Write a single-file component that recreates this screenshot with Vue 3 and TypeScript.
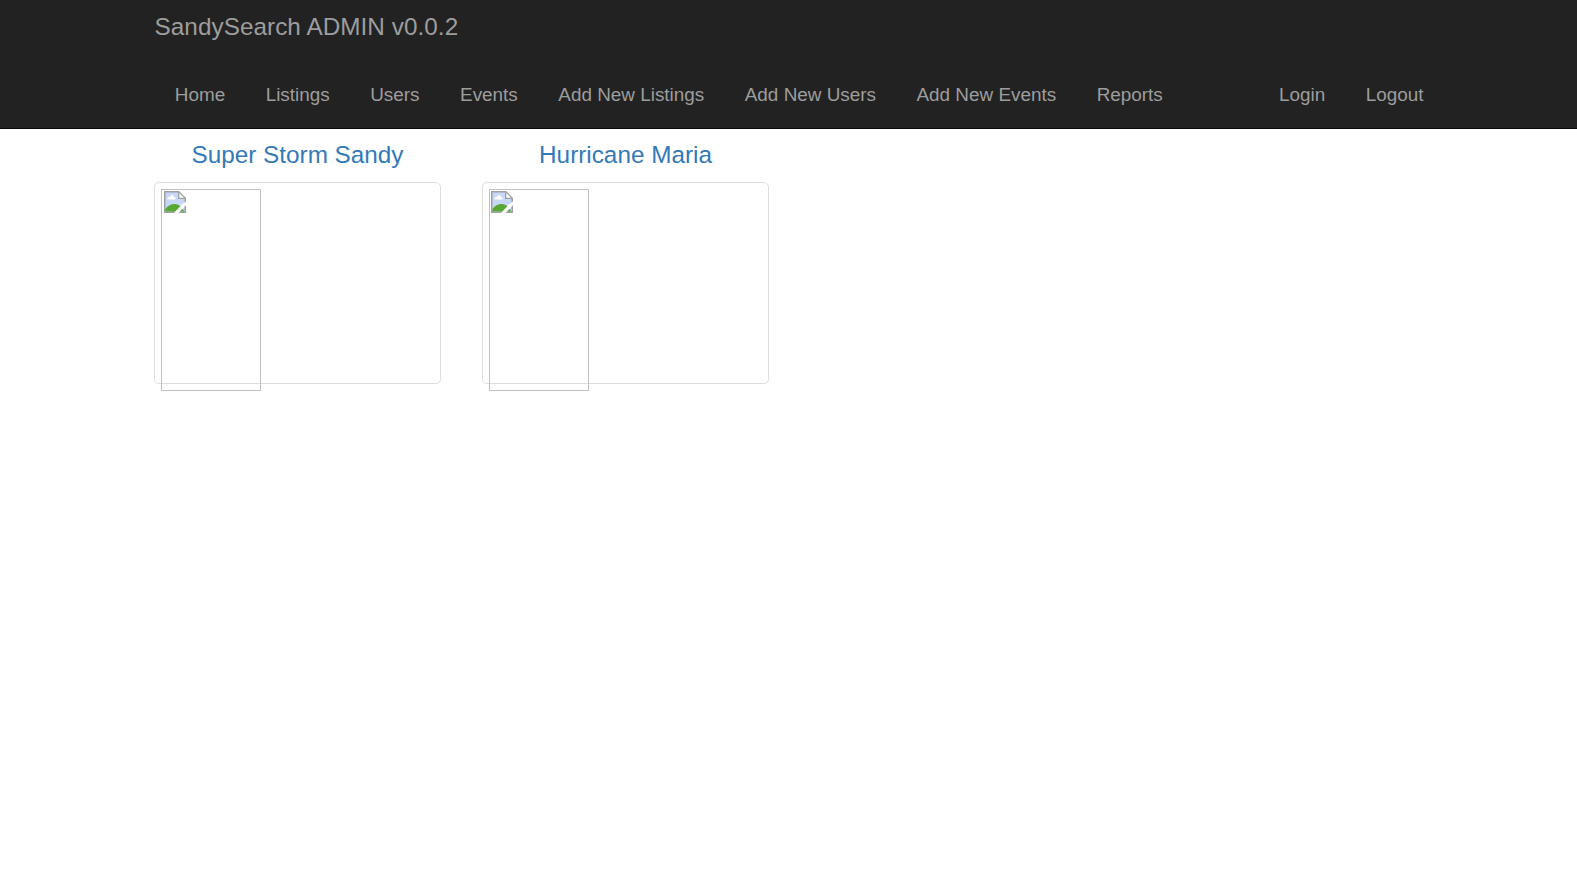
<script setup lang="ts">
interface EventItem {
  title: string
}

const mainLinks: string[] = [
  'Home',
  'Listings',
  'Users',
  'Events',
  'Add New Listings',
  'Add New Users',
  'Add New Events',
  'Reports',
]
const accountLinks: string[] = ['Login', 'Logout']
const events: EventItem[] = [{ title: 'Super Storm Sandy' }, { title: 'Hurricane Maria' }]
</script>

<template>
  <div class="page">
    <header class="navbar">
      <div class="container">
        <a class="brand">SandySearch ADMIN v0.0.2</a>
        <nav class="links">
          <a v-for="link in mainLinks" :key="link" class="link">{{ link }}</a>
          <span class="spacer"></span>
          <a v-for="link in accountLinks" :key="link" class="link">{{ link }}</a>
        </nav>
      </div>
    </header>

    <main class="container events">
      <section v-for="event in events" :key="event.title" class="event">
        <h4 class="title">{{ event.title }}</h4>
        <div class="thumbnail">
          <div class="picture">
            <svg class="missing" width="22" height="22" viewBox="0 0 22 22">
              <path d="M0 0H15L22 7V22H0Z" fill="#a0a0a0" />
              <path d="M1.5 1.5H14V8H20.5V20.5H1.5Z" fill="#c6d7f8" />
              <path d="M15.3 2V6.7H20Z" fill="#fff" />
              <path d="M3.5 8.5C3 6.3 5.3 5.5 6 6C6.5 3.2 10 3.6 10 6C12 5.7 12.2 8.5 10.5 8.5Z" fill="#fff" />
              <path d="M1.5 20.5V18C3.5 14.5 7.5 13 10.5 13C13.5 13 16 14.5 17.5 17L20.5 20.5Z" fill="#56a832" />
              <path d="M22 10.5V14L14.5 22H10L18.5 13Z" fill="#fff" />
            </svg>
          </div>
        </div>
      </section>
    </main>
  </div>
</template>

<style>
body {
  background: #fff;
}
</style>

<style scoped>
.page {
  min-height: 100vh;
  font-family: "Liberation Sans", Arial, sans-serif;
  font-size: 18.9px;
  line-height: 27px;
}
.container {
  box-sizing: border-box;
  width: 1309.5px;
  margin: 0 auto;
  padding: 0 20.25px;
}
.navbar {
  box-sizing: border-box;
  height: 129px;
  background: #222;
  border-bottom: 1px solid #080808;
  color: #9d9d9d;
}
.brand {
  display: block;
  height: 61px;
  padding: 13px 0 0 0.5px;
  box-sizing: border-box;
  font-size: 24.3px;
  letter-spacing: 0.05px;
}
.links {
  display: flex;
  margin-right: -20.75px;
  padding: 20px 0 0 0.5px;
}
.link {
  padding: 0 20.25px;
  white-space: nowrap;
}
.spacer {
  flex: 1;
}
.events {
  display: flex;
  gap: 41px;
}
.event {
  width: 287px;
}
.title {
  margin: 0;
  height: 53px;
  padding-top: 12px;
  box-sizing: border-box;
  font-size: 24.3px;
  font-weight: 500;
  text-align: center;
  color: #337ab7;
}
.thumbnail {
  box-sizing: border-box;
  height: 202px;
  margin-bottom: 27px;
  padding: 6px;
  border: 1px solid #ddd;
  border-radius: 5px;
}
.picture {
  box-sizing: border-box;
  width: 100px;
  height: 202px;
  padding: 1px 2px;
  border: 1px solid #c0c0c0;
}
.event + .event .picture {
  padding-left: 1px;
}
.missing {
  display: block;
}
</style>
